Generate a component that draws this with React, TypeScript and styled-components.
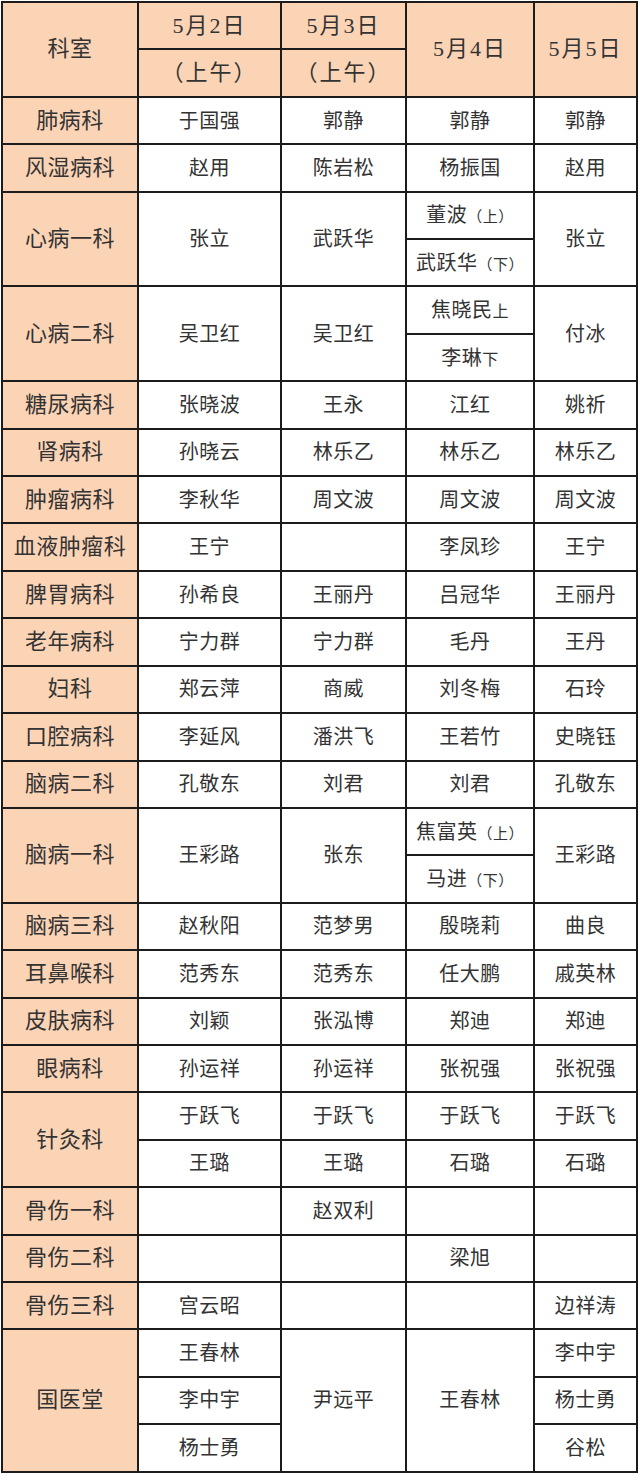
import React from 'react';
import styled, { createGlobalStyle } from 'styled-components';

const GlobalStyle = createGlobalStyle`
  html, body {
    margin: 0;
    padding: 0;
    background: #ffffff;
  }
`;

const PEACH = '#fbd4b6';
const LINE = '#1c1c1c';
const UNIT = 47.42;

const Page = styled.div`
  width: 640px;
  height: 1476px;
  padding: 1px 0 0 1px;
  box-sizing: border-box;
  background: #ffffff;
`;

const Schedule = styled.table`
  border-collapse: separate;
  border-spacing: 0;
  table-layout: fixed;
  width: 637px;
  border-top: 2px solid ${LINE};
  border-left: 2px solid ${LINE};
  font-family: 'Liberation Serif', 'Noto Sans CJK SC', serif;
  color: #333333;
`;

const Row = styled.tr`
  height: ${UNIT}px;
`;

const Cell = styled.td<{ $head?: boolean }>`
  padding: 0;
  border-right: 2px solid ${LINE};
  border-bottom: 2px solid ${LINE};
  background: ${(p) => (p.$head ? PEACH : '#ffffff')};
  text-align: center;
  vertical-align: middle;
  font-size: ${(p) => (p.$head ? '22px' : '20px')};
  line-height: 1;
  white-space: nowrap;
  letter-spacing: 0.5px;
`;

const HeadCell = styled(Cell).attrs({ as: 'th', $head: true })<{ $spaced?: boolean }>`
  font-weight: normal;
  font-size: 22px;
  letter-spacing: ${(p) => (p.$spaced ? '2px' : '0.5px')};
`;

const Note = styled.span`
  font-size: 15px;
`;

const Part = styled.span`
  font-size: 16px;
`;

type Entry = string | { text: string; note: string; paren?: boolean };

function Name({ value }: { value: Entry }): JSX.Element {
  if (typeof value === 'string') return <>{value}</>;
  return (
    <>
      {value.text}
      {value.paren ? <Note>（{value.note}）</Note> : <Part>{value.note}</Part>}
    </>
  );
}

interface SimpleRow {
  dept: string;
  names: Entry[];
}

function simple(dept: string, ...names: Entry[]): SimpleRow {
  return { dept, names };
}

function Simple({ row }: { row: SimpleRow }): JSX.Element {
  return (
    <Row>
      <Cell $head>{row.dept}</Cell>
      {row.names.map((n, i) => (
        <Cell key={i}>
          <Name value={n} />
        </Cell>
      ))}
    </Row>
  );
}

// 5月4日 split into morning / afternoon, other days span both rows
function SplitDay({
  dept,
  d2,
  d3,
  top,
  bottom,
  d5,
}: {
  dept: string;
  d2: string;
  d3: string;
  top: Entry;
  bottom: Entry;
  d5: string;
}): JSX.Element {
  return (
    <>
      <Row>
        <Cell $head rowSpan={2}>
          {dept}
        </Cell>
        <Cell rowSpan={2}>{d2}</Cell>
        <Cell rowSpan={2}>{d3}</Cell>
        <Cell>
          <Name value={top} />
        </Cell>
        <Cell rowSpan={2}>{d5}</Cell>
      </Row>
      <Row>
        <Cell>
          <Name value={bottom} />
        </Cell>
      </Row>
    </>
  );
}

const before = [
  simple('肺病科', '于国强', '郭静', '郭静', '郭静'),
  simple('风湿病科', '赵用', '陈岩松', '杨振国', '赵用'),
];

const middle = [
  simple('糖尿病科', '张晓波', '王永', '江红', '姚祈'),
  simple('肾病科', '孙晓云', '林乐乙', '林乐乙', '林乐乙'),
  simple('肿瘤病科', '李秋华', '周文波', '周文波', '周文波'),
  simple('血液肿瘤科', '王宁', '', '李凤珍', '王宁'),
  simple('脾胃病科', '孙希良', '王丽丹', '吕冠华', '王丽丹'),
  simple('老年病科', '宁力群', '宁力群', '毛丹', '王丹'),
  simple('妇科', '郑云萍', '商威', '刘冬梅', '石玲'),
  simple('口腔病科', '李延风', '潘洪飞', '王若竹', '史晓钰'),
  simple('脑病二科', '孔敬东', '刘君', '刘君', '孔敬东'),
];

const later = [
  simple('脑病三科', '赵秋阳', '范梦男', '殷晓莉', '曲良'),
  simple('耳鼻喉科', '范秀东', '范秀东', '任大鹏', '戚英林'),
  simple('皮肤病科', '刘颖', '张泓博', '郑迪', '郑迪'),
  simple('眼病科', '孙运祥', '孙运祥', '张祝强', '张祝强'),
];

const bone = [
  simple('骨伤一科', '', '赵双利', '', ''),
  simple('骨伤二科', '', '', '梁旭', ''),
  simple('骨伤三科', '宫云昭', '', '', '边祥涛'),
];

export default function App(): JSX.Element {
  return (
    <Page>
      <GlobalStyle />
      <Schedule>
        <colgroup>
          <col style={{ width: 136 }} />
          <col style={{ width: 143 }} />
          <col style={{ width: 125 }} />
          <col style={{ width: 128 }} />
          <col style={{ width: 103 }} />
        </colgroup>
        <thead>
          <Row>
            <HeadCell rowSpan={2}>科室</HeadCell>
            <HeadCell $spaced>5月2日</HeadCell>
            <HeadCell $spaced>5月3日</HeadCell>
            <HeadCell $spaced rowSpan={2}>
              5月4日
            </HeadCell>
            <HeadCell $spaced rowSpan={2}>
              5月5日
            </HeadCell>
          </Row>
          <Row>
            <HeadCell $spaced>（上午）</HeadCell>
            <HeadCell $spaced>（上午）</HeadCell>
          </Row>
        </thead>
        <tbody>
          {before.map((r) => (
            <Simple key={r.dept} row={r} />
          ))}
          <SplitDay
            dept="心病一科"
            d2="张立"
            d3="武跃华"
            top={{ text: '董波', note: '上', paren: true }}
            bottom={{ text: '武跃华', note: '下', paren: true }}
            d5="张立"
          />
          <SplitDay
            dept="心病二科"
            d2="吴卫红"
            d3="吴卫红"
            top={{ text: '焦晓民', note: '上' }}
            bottom={{ text: '李琳', note: '下' }}
            d5="付冰"
          />
          {middle.map((r) => (
            <Simple key={r.dept} row={r} />
          ))}
          <SplitDay
            dept="脑病一科"
            d2="王彩路"
            d3="张东"
            top={{ text: '焦富英', note: '上', paren: true }}
            bottom={{ text: '马进', note: '下', paren: true }}
            d5="王彩路"
          />
          {later.map((r) => (
            <Simple key={r.dept} row={r} />
          ))}
          <Row>
            <Cell $head rowSpan={2}>
              针灸科
            </Cell>
            <Cell>于跃飞</Cell>
            <Cell>于跃飞</Cell>
            <Cell>于跃飞</Cell>
            <Cell>于跃飞</Cell>
          </Row>
          <Row>
            <Cell>王璐</Cell>
            <Cell>王璐</Cell>
            <Cell>石璐</Cell>
            <Cell>石璐</Cell>
          </Row>
          {bone.map((r) => (
            <Simple key={r.dept} row={r} />
          ))}
          <Row>
            <Cell $head rowSpan={3}>
              国医堂
            </Cell>
            <Cell>王春林</Cell>
            <Cell rowSpan={3}>尹远平</Cell>
            <Cell rowSpan={3}>王春林</Cell>
            <Cell>李中宇</Cell>
          </Row>
          <Row>
            <Cell>李中宇</Cell>
            <Cell>杨士勇</Cell>
          </Row>
          <Row>
            <Cell>杨士勇</Cell>
            <Cell>谷松</Cell>
          </Row>
        </tbody>
      </Schedule>
    </Page>
  );
}
